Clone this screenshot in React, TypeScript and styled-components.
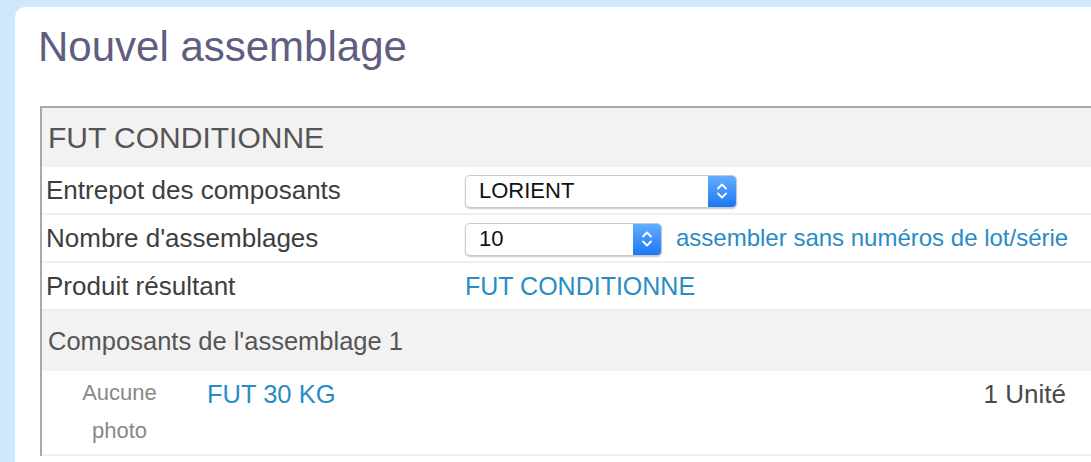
import React from "react";
import styled, { createGlobalStyle } from "styled-components";

const Global = createGlobalStyle`
  html, body { margin: 0; padding: 0; }
  body {
    background: #cfe8fb;
    overflow: hidden;
    font-family: "Liberation Sans", Arial, Helvetica, sans-serif;
  }
`;

const Card = styled.div`
  margin: 7px 0 0 15px;
  padding: 16px 0 0 25px;
  box-sizing: border-box;
  height: calc(100vh - 7px);
  overflow: hidden;
  background: #ffffff;
  border-top-left-radius: 10px;
`;

const Title = styled.h1`
  margin: 0 0 35px -2px;
  font-size: 42px;
  line-height: 48px;
  font-weight: 400;
  color: #5f5e81;
`;

const Table = styled.div`
  border-top: 2px solid #a9a9a9;
  border-left: 2px solid #a9a9a9;
  display: flex;
  flex-direction: column;
`;

const SectionHeader = styled.div<{ $h: number; $size: number }>`
  height: ${(p) => p.$h}px;
  display: flex;
  align-items: center;
  padding-left: 6px;
  background: #f2f2f2;
  color: #555555;
  font-size: ${(p) => p.$size}px;
`;

const Row = styled.div`
  display: grid;
  grid-template-columns: 423px 1fr;
  align-items: center;
  height: 46px;
  border-bottom: 2px solid #efefef;
`;

const Label = styled.div`
  padding-left: 4px;
  font-size: 26px;
  color: #3e3e3e;
`;

const Value = styled.div`
  display: flex;
  align-items: center;
  gap: 14px;
`;

const Link = styled.a<{ $size: number }>`
  font-size: ${(p) => p.$size}px;
  color: #2a8cc4;
  text-decoration: none;
  cursor: pointer;
`;

const SelectBox = styled.div<{ $w: number }>`
  width: ${(p) => p.$w}px;
  height: 33px;
  margin-top: 2px;
  box-sizing: border-box;
  display: flex;
  align-items: stretch;
  border: 1px solid #c9c9c9;
  border-radius: 5px;
  background: #ffffff;
  box-shadow: 0 1px 1.5px rgba(0, 0, 0, 0.22);
  overflow: hidden;
`;

const SelectText = styled.div`
  flex: 1;
  display: flex;
  align-items: center;
  padding-left: 13px;
  font-size: 22px;
  color: #111111;
`;

const SelectArrow = styled.div`
  width: 28px;
  display: flex;
  align-items: center;
  justify-content: center;
  background: linear-gradient(#62adff, #1b78f3);
`;

const ComponentRow = styled.div`
  display: grid;
  grid-template-columns: 155px 1fr auto;
  align-items: start;
  padding: 3px 0 4px;
  border-bottom: 2px solid #efefef;
`;

const Photo = styled.div`
  text-align: center;
  font-size: 22px;
  line-height: 38px;
  color: #888888;
`;

const CompName = styled.div`
  padding-left: 10px;
  line-height: 40px;
`;

const Qty = styled.div`
  padding-right: 25px;
  font-size: 26px;
  line-height: 40px;
  color: #4a4a4a;
`;

const Chevrons = () => (
  <svg width="12" height="20" viewBox="0 0 12 20" fill="none">
    <path d="M2 7.5 L6 3.5 L10 7.5" stroke="#fff" strokeWidth="1.8" strokeLinecap="round" strokeLinejoin="round" />
    <path d="M2 12.5 L6 16.5 L10 12.5" stroke="#fff" strokeWidth="1.8" strokeLinecap="round" strokeLinejoin="round" />
  </svg>
);

const Select = ({ value, width }: { value: string; width: number }) => (
  <SelectBox $w={width}>
    <SelectText>{value}</SelectText>
    <SelectArrow>
      <Chevrons />
    </SelectArrow>
  </SelectBox>
);

export default function App() {
  return (
    <>
      <Global />
      <Card>
        <Title>Nouvel assemblage</Title>
        <Table>
          <SectionHeader $h={59} $size={30}>FUT CONDITIONNE</SectionHeader>
          <Row>
            <Label>Entrepot des composants</Label>
            <Value>
              <Select value="LORIENT" width={272} />
            </Value>
          </Row>
          <Row>
            <Label>Nombre d'assemblages</Label>
            <Value>
              <Select value="10" width={197} />
              <Link $size={24}>assembler sans numéros de lot/série</Link>
            </Value>
          </Row>
          <Row>
            <Label>Produit résultant</Label>
            <Value>
              <Link $size={25}>FUT CONDITIONNE</Link>
            </Value>
          </Row>
          <SectionHeader $h={60} $size={25.5}>Composants de l'assemblage 1</SectionHeader>
          <ComponentRow>
            <Photo>
              Aucune
              <br />
              photo
            </Photo>
            <CompName>
              <Link $size={25.5}>FUT 30 KG</Link>
            </CompName>
            <Qty>1 Unité</Qty>
          </ComponentRow>
        </Table>
      </Card>
    </>
  );
}
